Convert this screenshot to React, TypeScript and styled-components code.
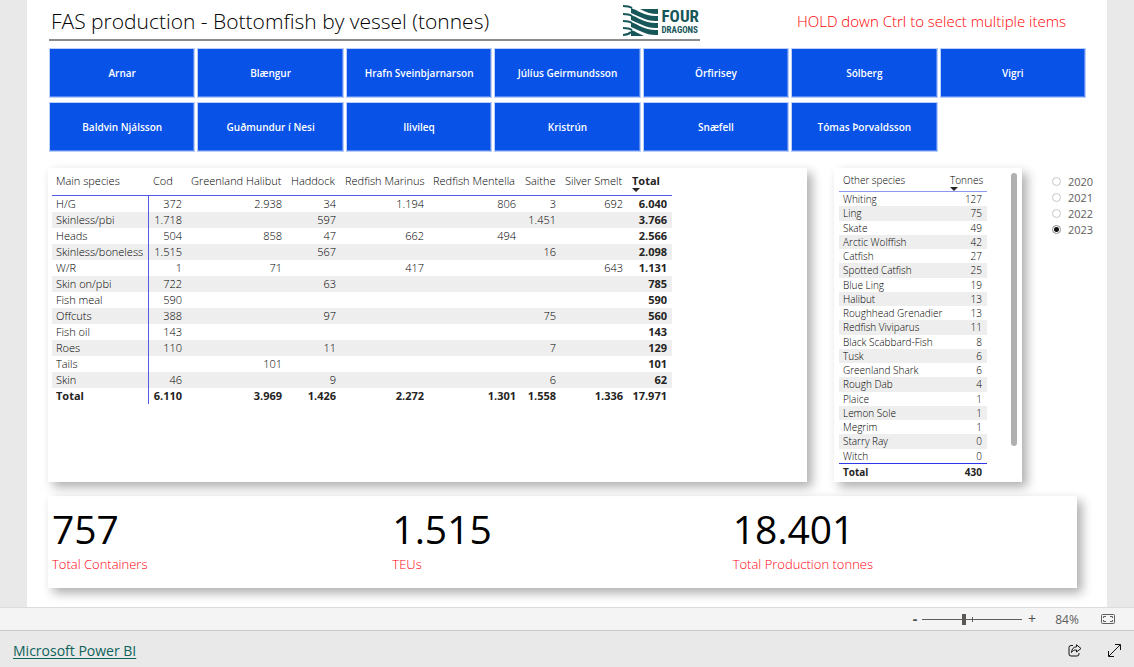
import React, { useState } from "react";
import styled, { createGlobalStyle } from "styled-components";

const GlobalStyle = createGlobalStyle`
  * { box-sizing: border-box; }
  html, body { margin: 0; padding: 0; }
  body { background: #e9e9e9; color: #252423; font-family: "Open Sans", "Noto Sans", sans-serif; }
  button, input { font: inherit; margin: 0; }
  button { padding: 0; border: 0; background: none; cursor: pointer; }
`;

const Page = styled.div`
  min-height: 100vh;
  display: flex;
  flex-direction: column;
`;

const Report = styled.main`
  flex: 1;
  margin: 0 27px;
  padding: 0 0 19px 21px;
  background: #fff;
`;

const Header = styled.header`
  display: grid;
  grid-template-columns: 651fr 386fr;
  padding: 0 21px 0 1px;
`;

const TitleBar = styled.div`
  display: flex;
  justify-content: space-between;
  align-items: center;
  height: 41px;
  padding: 2px 1px 0 2px;
  border-bottom: 2px solid #8c8c8c;
`;

const Title = styled.h1`
  margin: 0;
  color: #000;
  font-size: 21px;
  font-weight: 300;
  line-height: 28px;
  white-space: nowrap;
`;

const Logo = styled.div`
  display: flex;
  gap: 4px;
  align-items: center;
  color: #17575a;
`;

const LogoText = styled.div`
  display: flex;
  flex-direction: column;
  padding-top: 2px;
  font-family: "Roboto Condensed", "Liberation Sans Narrow", "Liberation Sans", sans-serif;
  font-weight: 700;
`;

const LogoName = styled.span<{ $small?: boolean }>`
  font-size: ${(p) => (p.$small ? 9 : 17)}px;
  line-height: ${(p) => (p.$small ? 11 : 17)}px;
`;

const Hint = styled.p`
  margin: 0;
  padding: 7px 20px 0 0;
  color: #ff0000;
  font-size: 15px;
  font-weight: 300;
  line-height: 28px;
  text-align: right;
`;

const Tiles = styled.div`
  display: grid;
  grid-template-columns: repeat(7, 1fr);
  gap: 4px 2px;
  padding: 7px 21px 0 1px;
`;

const Tile = styled.button`
  height: 50px;
  border: 1px solid #bccffa;
  box-shadow: inset -1px -1px 0 #5587f0;
  background: #0852e8;
  color: #fff;
  font-size: 10px;
  font-weight: 600;
`;

const PanelRow = styled.div`
  display: flex;
  align-items: stretch;
  padding-top: 16px;
`;

const Panel = styled.section`
  background: #fff;
  box-shadow: 5px 5px 10px rgba(0, 0, 0, 0.32);
`;

const MainPanel = styled(Panel)`
  flex: 1;
  min-width: 0;
  height: 314px;
  padding-left: 4px;
`;

const OtherPanel = styled(Panel)`
  display: flex;
  justify-content: space-between;
  width: 188px;
  margin: 0 30px 0 27px;
  padding: 0 5px;
`;

const Matrix = styled.table`
  width: 620px;
  table-layout: fixed;
  border-spacing: 0;
  color: #000;
  font-size: 11px;
  line-height: 16px;
  white-space: nowrap;

  th, td { padding: 0 5px 0 4px; font-weight: 350; }
  td { text-align: right; }
  th { text-align: left; }
  thead th { height: 28px; padding-bottom: 2px; border-bottom: 1px solid #4f5be0; }
  tbody th, tfoot th { border-right: 1px solid #4f5be0; }
  tbody tr:nth-child(even) { background: #eeeeee; }
  td:last-child, thead th:last-child, tfoot th, tfoot td { color: #252423; font-weight: 700; }
`;

const List = styled.table`
  width: 148px;
  height: 312px;
  table-layout: fixed;
  border-spacing: 0;
  color: #000;
  font-size: 10px;
  line-height: 14px;
  white-space: nowrap;

  th, td { padding: 0 5px 0 4px; font-weight: 350; text-align: left; }
  td { text-align: right; }
  thead th { height: 24px; border-bottom: 1px solid #8f97f5; }
  tbody tr:nth-child(even) { background: #eeeeee; }
  tfoot th, tfoot td { height: 17px; border-top: 1px solid #2b39e6; color: #252423; font-weight: 700; }
`;

const Col = styled.col<{ $w: number }>`
  width: ${(p) => p.$w}px;
`;

const Sorted = styled.span`
  position: relative;
  &::after {
    content: "";
    position: absolute;
    left: 0;
    top: 100%;
    border: 4px solid transparent;
    border-top-color: #252423;
    border-bottom: 0;
  }
`;

const ScrollThumb = styled.div`
  width: 6px;
  height: 273px;
  margin-top: 5px;
  border-radius: 3px;
  background: #b0b0b0;
`;

const Years = styled.fieldset`
  width: 55px;
  margin: 0;
  padding: 5px 0 0;
  border: 0;
`;

const Year = styled.label`
  display: flex;
  align-items: center;
  gap: 7px;
  height: 16px;
  color: #605e5c;
  font-size: 11px;
`;

const Radio = styled.input`
  appearance: none;
  width: 9px;
  height: 9px;
  border: 1px solid #c8c6c4;
  border-radius: 50%;
  background: #fff;
  &:checked {
    border-color: #8a8a8a;
    background: radial-gradient(circle, #111 0 2px, #fff 3px);
  }
`;

const Kpis = styled(Panel)`
  display: grid;
  grid-template-columns: repeat(3, 1fr);
  height: 92px;
  margin: 14px 30px 0 0;
  padding: 6px 4px 0;
`;

const Kpi = styled.div`
  display: flex;
  flex-direction: column;
`;

const KpiValue = styled.span`
  color: #000;
  font-size: 39px;
  line-height: 54px;
`;

const KpiLabel = styled.span`
  color: #ff0010;
  font-size: 13px;
  font-weight: 300;
  line-height: 16px;
`;

const ZoomBar = styled.div`
  display: flex;
  justify-content: flex-end;
  align-items: center;
  height: 24px;
  padding-right: 19px;
  border-top: 1px solid #dcdcdc;
  border-bottom: 1px solid #c8c8c8;
  background: #f4f4f4;
  color: #605e5c;
  font-size: 12px;
`;

const ZoomButton = styled.button`
  width: 20px;
  color: #4f4d4b;
  font-size: 14px;
  line-height: 20px;
`;

const ZoomOutButton = styled(ZoomButton)`
  width: 14px;
  font-weight: 700;
`;

const ZoomTrack = styled.div`
  display: flex;
  width: 100px;
  background: linear-gradient(#605e5c, #605e5c) 50px 50% / 1px 5px no-repeat;
`;

const ZoomSlider = styled.input`
  appearance: none;
  width: 100%;
  height: 12px;
  background: linear-gradient(#605e5c, #605e5c) 0 50% / 100% 1px no-repeat;
  &::-webkit-slider-thumb {
    appearance: none;
    width: 4px;
    height: 11px;
    background: #5a5856;
  }
`;

const ZoomValue = styled.output`
  width: 50px;
  text-align: center;
`;

const FitButton = styled.button`
  display: flex;
  margin-left: 9px;
  color: #605e5c;
`;

const Footer = styled.footer`
  display: flex;
  align-items: center;
  gap: 26px;
  height: 36px;
  padding: 3px 13px 0;
`;

const BrandLink = styled.a`
  margin-right: auto;
  color: #0d6259;
  font-size: 14px;
  line-height: 20px;
  text-underline-offset: 2px;
`;

const IconButton = styled.button`
  display: flex;
  color: #111;
`;

const vessels = [
  "Arnar", "Blængur", "Hrafn Sveinbjarnarson", "Júlíus Geirmundsson", "Örfirisey", "Sólberg", "Vigri",
  "Baldvin Njálsson", "Guðmundur í Nesi", "Ilivileq", "Kristrún", "Snæfell", "Tómas Þorvaldsson",
];

const matrixWidths = [97, 38, 100, 54, 88, 92, 40, 67, 44];
const species = ["Cod", "Greenland Halibut", "Haddock", "Redfish Marinus", "Redfish Mentella", "Saithe", "Silver Smelt"];

const matrixRows: string[][] = [
  ["H/G", "372", "2.938", "34", "1.194", "806", "3", "692", "6.040"],
  ["Skinless/pbi", "1.718", "", "597", "", "", "1.451", "", "3.766"],
  ["Heads", "504", "858", "47", "662", "494", "", "", "2.566"],
  ["Skinless/boneless", "1.515", "", "567", "", "", "16", "", "2.098"],
  ["W/R", "1", "71", "", "417", "", "", "643", "1.131"],
  ["Skin on/pbi", "722", "", "63", "", "", "", "", "785"],
  ["Fish meal", "590", "", "", "", "", "", "", "590"],
  ["Offcuts", "388", "", "97", "", "", "75", "", "560"],
  ["Fish oil", "143", "", "", "", "", "", "", "143"],
  ["Roes", "110", "", "11", "", "", "7", "", "129"],
  ["Tails", "", "101", "", "", "", "", "", "101"],
  ["Skin", "46", "", "9", "", "", "6", "", "62"],
];
const matrixTotal = ["Total", "6.110", "3.969", "1.426", "2.272", "1.301", "1.558", "1.336", "17.971"];

const otherRows: [string, number][] = [
  ["Whiting", 127], ["Ling", 75], ["Skate", 49], ["Arctic Wolffish", 42], ["Catfish", 27],
  ["Spotted Catfish", 25], ["Blue Ling", 19], ["Halibut", 13], ["Roughhead Grenadier", 13],
  ["Redfish Viviparus", 11], ["Black Scabbard-Fish", 8], ["Tusk", 6], ["Greenland Shark", 6],
  ["Rough Dab", 4], ["Plaice", 1], ["Lemon Sole", 1], ["Megrim", 1], ["Starry Ray", 0], ["Witch", 0],
];

const kpis = [
  ["757", "Total Containers"],
  ["1.515", "TEUs"],
  ["18.401", "Total Production tonnes"],
];

function Waves() {
  return (
    <svg width="35" height="32" viewBox="0 0 35 32" aria-hidden="true">
      <g fill="none" stroke="currentColor" strokeWidth="2">
        {[1, 9, 16, 23].map((y) => (
          <path key={y} d={`M0 ${y}C3 ${y} 6 ${y} 9 ${y + 2}`} />
        ))}
        <path d="M0 30C3 30 6 29 8 27" />
      </g>
      <g fill="currentColor">
        <path d="M17 4H35V9C28 9 22 7 17 4Z" />
        {[3, 10, 17].map((y) => (
          <path key={y} d={`M8 ${y}C15 ${y + 2} 22 ${y + 9} 35 ${y + 8}V${y + 13}C24 ${y + 14} 16 ${y + 8} 8 ${y + 5}Z`} />
        ))}
        <path d="M8 25C12 26 16 29 21 31H8Z" />
      </g>
    </svg>
  );
}

export default function App() {
  const [selected, setSelected] = useState<string[]>([]);
  const [year, setYear] = useState("2023");
  const [zoom, setZoom] = useState(42);

  const pick = (name: string, multi: boolean) =>
    setSelected((now) =>
      now.includes(name) ? now.filter((n) => n !== name) : multi ? [...now, name] : [name]
    );

  return (
    <Page>
      <GlobalStyle />
      <Report>
        <Header>
          <TitleBar>
            <Title>FAS production - Bottomfish by vessel (tonnes)</Title>
            <Logo>
              <Waves />
              <LogoText>
                <LogoName>FOUR</LogoName>
                <LogoName $small>DRAGONS</LogoName>
              </LogoText>
            </Logo>
          </TitleBar>
          <Hint>HOLD down Ctrl to select multiple items</Hint>
        </Header>

        <Tiles>
          {vessels.map((name) => (
            <Tile
              key={name}
              type="button"
              aria-pressed={selected.includes(name)}
              onClick={(e) => pick(name, e.ctrlKey)}
            >
              {name}
            </Tile>
          ))}
        </Tiles>

        <PanelRow>
          <MainPanel>
            <Matrix>
              <colgroup>
                {matrixWidths.map((w, i) => <Col key={i} $w={w} />)}
              </colgroup>
              <thead>
                <tr>
                  <th scope="col">Main species</th>
                  {species.map((s) => <th key={s} scope="col">{s}</th>)}
                  <th scope="col"><Sorted>Total</Sorted></th>
                </tr>
              </thead>
              <tbody>
                {matrixRows.map(([name, ...cells]) => (
                  <tr key={name}>
                    <th scope="row">{name}</th>
                    {cells.map((c, i) => <td key={i}>{c}</td>)}
                  </tr>
                ))}
              </tbody>
              <tfoot>
                <tr>
                  <th scope="row">{matrixTotal[0]}</th>
                  {matrixTotal.slice(1).map((c, i) => <td key={i}>{c}</td>)}
                </tr>
              </tfoot>
            </Matrix>
          </MainPanel>

          <OtherPanel>
            <List>
              <colgroup>
                <Col $w={107} />
                <Col $w={41} />
              </colgroup>
              <thead>
                <tr>
                  <th scope="col">Other species</th>
                  <th scope="col"><Sorted>Tonnes</Sorted></th>
                </tr>
              </thead>
              <tbody>
                {otherRows.map(([name, t]) => (
                  <tr key={name}>
                    <th scope="row">{name}</th>
                    <td>{t}</td>
                  </tr>
                ))}
              </tbody>
              <tfoot>
                <tr>
                  <th scope="row">Total</th>
                  <td>430</td>
                </tr>
              </tfoot>
            </List>
            <ScrollThumb />
          </OtherPanel>

          <Years aria-label="Year">
            {["2020", "2021", "2022", "2023"].map((y) => (
              <Year key={y}>
                <Radio type="radio" name="year" value={y} checked={year === y} onChange={() => setYear(y)} />
                {y}
              </Year>
            ))}
          </Years>
        </PanelRow>

        <Kpis>
          {kpis.map(([value, label]) => (
            <Kpi key={label}>
              <KpiValue>{value}</KpiValue>
              <KpiLabel>{label}</KpiLabel>
            </Kpi>
          ))}
        </Kpis>
      </Report>

      <ZoomBar>
        <ZoomOutButton type="button" aria-label="Zoom out" onClick={() => setZoom(Math.max(0, zoom - 5))}>-</ZoomOutButton>
        <ZoomTrack>
          <ZoomSlider
            type="range"
            min={0}
            max={100}
            value={zoom}
            aria-label="Zoom"
            onChange={(e) => setZoom(Number(e.target.value))}
          />
        </ZoomTrack>
        <ZoomButton type="button" aria-label="Zoom in" onClick={() => setZoom(Math.min(100, zoom + 5))}>+</ZoomButton>
        <ZoomValue>{zoom * 2}%</ZoomValue>
        <FitButton type="button" aria-label="Fit to page">
          <svg width="14" height="10" viewBox="0 0 14 10" fill="none" stroke="currentColor" aria-hidden="true">
            <rect x="0.5" y="0.5" width="13" height="9" rx="1" />
            <path d="M5 2.5H2.5V4M2.5 6V7.5H5M9 2.5H11.5V4M11.5 6V7.5H9" />
          </svg>
        </FitButton>
      </ZoomBar>

      <Footer>
        <BrandLink href="#powerbi">Microsoft Power BI</BrandLink>
        <IconButton type="button" aria-label="Share">
          <svg width="14" height="13" viewBox="0 0 14 13" fill="none" stroke="currentColor" strokeLinejoin="round" aria-hidden="true">
            <path d="M5 1.5H3A2 2 0 0 0 1 3.5V10A2 2 0 0 0 3 12H9A2 2 0 0 0 11 10V9" />
            <path d="M8.5 0.8L13 4.5L8.5 8V6C6 6 4.5 6.5 3.5 8.5C3.7 5 5.5 3 8.5 2.8Z" />
          </svg>
        </IconButton>
        <IconButton type="button" aria-label="Full screen">
          <svg width="13" height="13" viewBox="0 0 13 13" fill="none" stroke="currentColor" aria-hidden="true">
            <path d="M1 12L12 1M7 0.5H12.5V6M0.5 7V12.5H6" />
          </svg>
        </IconButton>
      </Footer>
    </Page>
  );
}
